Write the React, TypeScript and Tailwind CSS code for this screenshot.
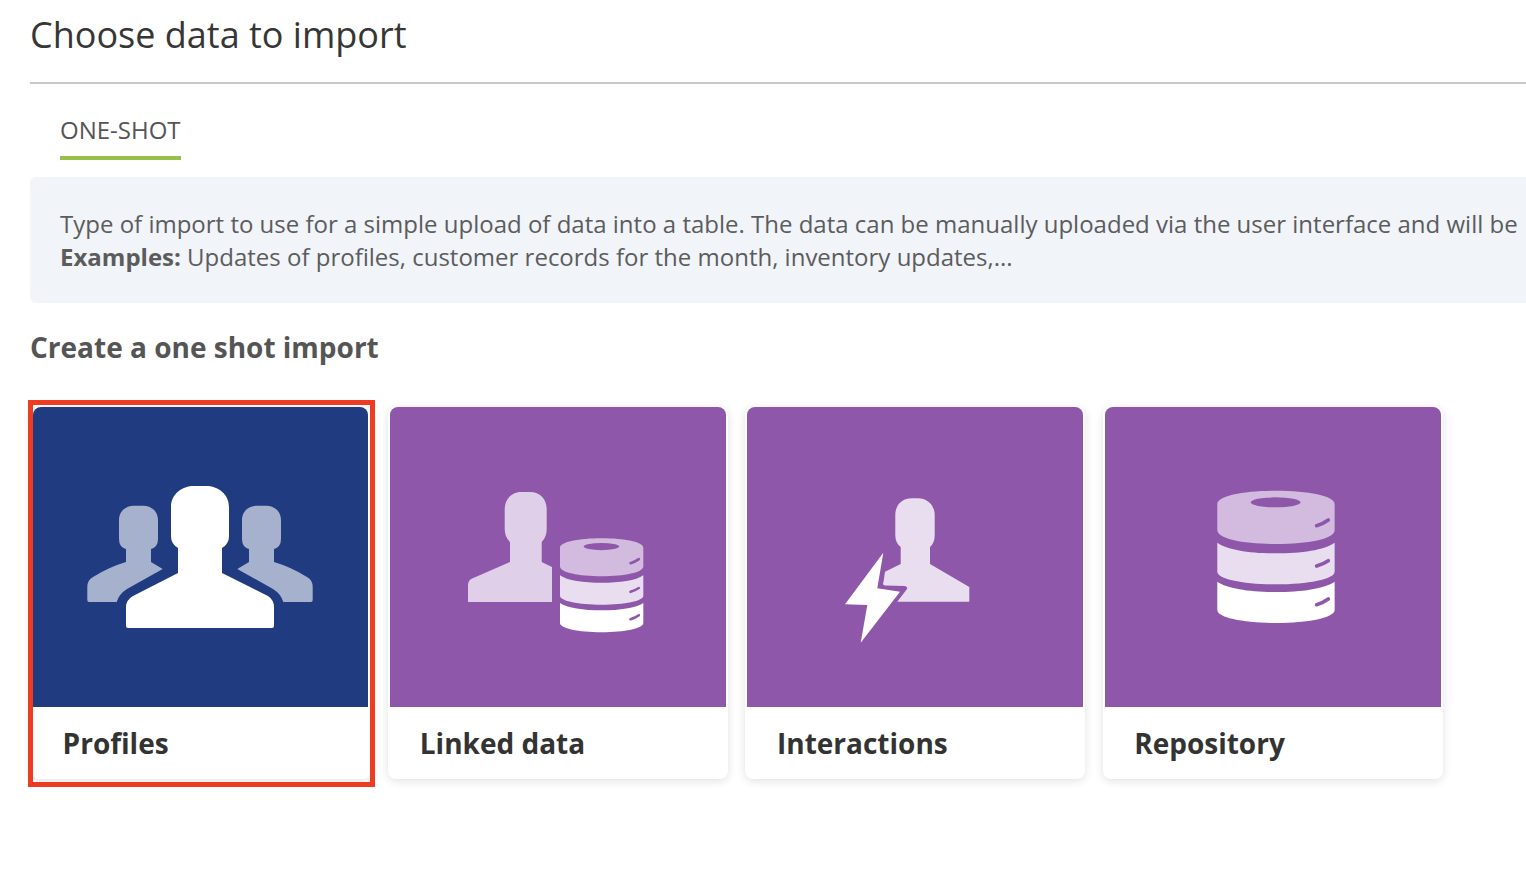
const FONT = "font-['Open_Sans','Liberation_Sans',sans-serif]"

function DbStack({ x, y, scale }: { x: number; y: number; scale: number }) {
  return (
    <g transform={`translate(${x} ${y}) scale(${scale})`}>
      <path
        fill="#d3bbe0"
        fillRule="evenodd"
        d="M0 40C0 15 80 0 176 0C272 0 352 15 352 40L352 118C352 145 272 160 176 160C80 160 0 145 0 118ZM100 35a75 15 0 1 0 150 0a75 15 0 1 0 -150 0Z"
      />
      <path fill="#e9deef" d="M0 156C30 178 100 188 176 188C252 188 322 178 352 156L352 243C352 265 272 281 176 281C80 281 0 265 0 243Z" />
      <path fill="#ffffff" d="M0 273C30 294 100 304 176 304C252 304 322 294 352 273L352 358C352 381 272 397 176 397C80 397 0 381 0 358Z" />
      <g stroke="#8e57aa" strokeWidth="11" strokeLinecap="round" fill="none">
        <path d="M298 105Q318 99 333 88" />
        <path d="M298 226Q318 220 333 210" />
        <path d="M298 342Q318 336 333 325" />
      </g>
    </g>
  )
}

function ProfilesIcon() {
  const side =
    "M56 195Q54.3 195 54.3 193L54.3 180Q54.3 173 60 170Q76 160 93 155L93 142Q86 140 86 132L86 113C86 104 93 98.7 101 98.7L110 98.7C118 98.7 125 104 125 113L125 132Q125 140 118 142L118 155L129.7 162L94 182Q86 187 83.7 195Z"
  return (
    <svg viewBox="0 0 336 300" className="w-[336px] h-[300px] block">
      <path fill="#a6b1cd" d={side} />
      <path fill="#a6b1cd" transform="translate(334 0) scale(-1 1)" d={side} />
      <path
        fill="#ffffff"
        transform="translate(93 79)"
        d="M2 142Q0 142 0 140L0 121Q0 114 7 110L52 87L52 62Q45 58 45 50L45 21C45 8 56 0 68 0L80 0C92 0 103 8 103 21L103 50Q103 58 96 62L96 87L142 110Q148 114 148 121L148 140Q148 142 146 142Z"
      />
    </svg>
  )
}

function LinkedIcon() {
  return (
    <svg viewBox="0 0 336 300" className="w-[336px] h-[300px] block">
      <path
        fill="#dfcfe8"
        d="M78 195L78 177Q78 174 81 172L120 155L120 135Q114.7 130 114.7 122L114.7 102C114.7 92 122 85 131 85L140 85C150 85 156.7 92 156.7 102L156.7 122Q156.7 130 151.7 135L151.7 155L162 160L162 195Z"
      />
      <DbStack x={170} y={131.3} scale={0.2367} />
    </svg>
  )
}

function InteractionsIcon() {
  return (
    <svg viewBox="0 0 336 300" className="w-[336px] h-[300px] block">
      <path
        fill="#e9deef"
        d="M222.3 194.7L222.3 180L183 157L183 140Q187.7 136 187.7 128L187.7 108C187.7 98 180 91.3 171 91.3L165 91.3C155 91.3 148.3 98 148.3 108L148.3 128Q148.3 136 153.7 140L153.7 157L138 164.7L136.5 175Q135 178 138 178.5L158 179Q161 180 160 182L150.3 194.7Z"
      />
      <path fill="#ffffff" d="M136.3 145.7L130.3 181.3L153 184.7L113.7 235.7L120.3 198L98 197.3Z" />
    </svg>
  )
}

function RepositoryIcon() {
  return (
    <svg viewBox="0 0 336 300" className="w-[336px] h-[300px] block">
      <DbStack x={112.3} y={83.7} scale={1 / 3} />
    </svg>
  )
}

const cards = [
  { label: "Profiles", bg: "bg-[#203b80]", Icon: ProfilesIcon, selected: true },
  { label: "Linked data", bg: "bg-[#8e57aa]", Icon: LinkedIcon, selected: false },
  { label: "Interactions", bg: "bg-[#8e57aa]", Icon: InteractionsIcon, selected: false },
  { label: "Repository", bg: "bg-[#8e57aa]", Icon: RepositoryIcon, selected: false },
]

export default function App() {
  return (
    <div className={`${FONT} w-[1526px] h-[886px] overflow-hidden bg-white pl-[30px]`}>
      <div className="w-[1600px] h-[84px] border-b-2 border-[#c9c9c9]">
        <h1 className="text-[36px] leading-[70px] text-[#363636] font-normal">Choose data to import</h1>
      </div>

      <div className="pl-[30px] h-[76px]">
        <div className="inline-block h-[76px] border-b-4 border-[#95c04c] pt-[29px] text-[24px] leading-[33px] text-[#555555]">
          ONE-SHOT
        </div>
      </div>

      <div className="mt-[17px] w-[1600px] h-[126px] rounded-md bg-[#f1f4f9] pt-[30px] pl-[30px] text-[24px] leading-[33px] text-[#5c5c5c] whitespace-nowrap">
        <p>Type of import to use for a simple upload of data into a table. The data can be manually uploaded via the user interface and will be</p>
        <p>
          <b className="font-bold">Examples:</b> Updates of profiles, customer records for the month, inventory updates,...
        </p>
      </div>

      <h2 className="mt-[25px] text-[28px] leading-[38px] font-bold text-[#555555]">Create a one shot import</h2>

      <div className="mt-[41px] ml-px flex gap-[17.2px]">
        {cards.map(({ label, bg, Icon, selected }) => (
          <div key={label} className="relative w-[340px] h-[372px] rounded-lg bg-white shadow-[0_2px_10px_rgba(0,0,0,0.12)]">
            <div className={`h-[300px] overflow-hidden rounded-t-lg ${selected ? "ml-[2px] mr-[3px]" : "mx-[2px]"} ${bg}`}>
              <Icon />
            </div>
            <div className="pl-[31.6px] h-[71px] flex items-center text-[28px] font-bold text-[#333333]">{label}</div>
            {selected && <div className="absolute -left-[3px] -top-[7px] w-[347px] h-[387px] border-[5px] border-[#ee3c23]" />}
          </div>
        ))}
      </div>
    </div>
  )
}
